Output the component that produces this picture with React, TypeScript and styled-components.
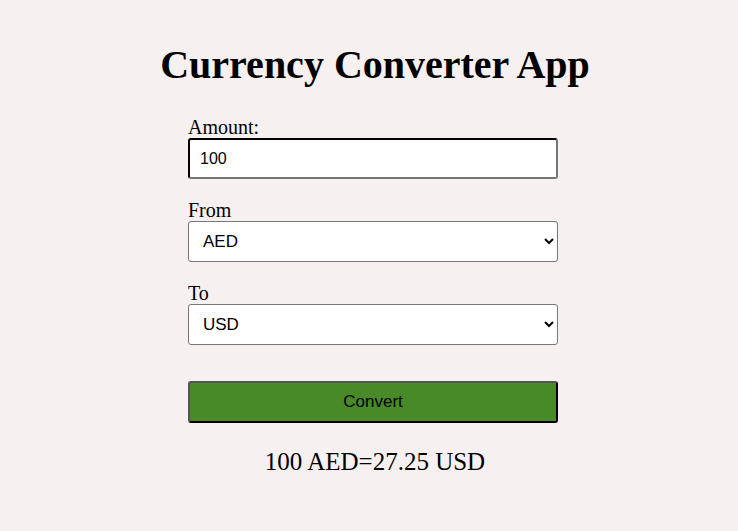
import React, { useState } from "react";
import styled, { createGlobalStyle } from "styled-components";

const Global = createGlobalStyle`
  html, body { margin: 0; padding: 0; background: #f6f0f0; }
  body { font-family: "Liberation Serif", "Times New Roman", serif; color: #000; }
`;

const Page = styled.div`
  display: flex;
  flex-direction: column;
  align-items: center;
  padding-top: 38px;
  padding-left: 8px;
`;

const Title = styled.h1`
  margin: 0 0 24px 4px;
  font-size: 40px;
  font-weight: bold;
  line-height: 54px;
`;

const Form = styled.div`
  width: 370px;
  display: flex;
  flex-direction: column;
`;

const Field = styled.div`
  display: flex;
  flex-direction: column;
  margin-bottom: 20px;
`;

const Label = styled.label`
  font-size: 20px;
  line-height: 22px;
`;

const Input = styled.input`
  box-sizing: border-box;
  height: 41px;
  width: 100%;
  border: 2px inset #767676;
  border-top-color: #202020;
  border-left-color: #202020;
  border-radius: 3px;
  padding: 0 10px;
  font-family: "Liberation Sans", Arial, sans-serif;
  font-size: 16px;
  background: #fff;
  outline: none;
`;

const Select = styled.select`
  box-sizing: border-box;
  height: 41px;
  width: 100%;
  border: 1px solid #767676;
  border-radius: 3px;
  padding: 0 10px;
  font-family: "Liberation Sans", Arial, sans-serif;
  font-size: 17px;
  background: #fff;
  color: #000;
`;

const Button = styled.button`
  box-sizing: border-box;
  margin-top: 16px;
  height: 42px;
  width: 100%;
  background: #488a28;
  border: 2px outset #4a4a4a;
  border-top-color: #555;
  border-left-color: #555;
  border-right-color: #1a1a1a;
  border-bottom-color: #1a1a1a;
  border-radius: 3px;
  font-family: "Liberation Sans", Arial, sans-serif;
  font-size: 17px;
  color: #000;
`;

const Result = styled.p`
  margin: 25px 0 0 4px;
  text-align: center;
  font-size: 25px;
`;

export default function App() {
  const [amount, setAmount] = useState("100");
  return (
    <>
      <Global />
      <Page>
        <Title>Currency Converter App</Title>
        <Form>
          <Field>
            <Label>Amount:</Label>
            <Input value={amount} onChange={(e) => setAmount(e.target.value)} />
          </Field>
          <Field>
            <Label>From</Label>
            <Select defaultValue="AED">
              <option>AED</option>
              <option>USD</option>
            </Select>
          </Field>
          <Field>
            <Label>To</Label>
            <Select defaultValue="USD">
              <option>AED</option>
              <option>USD</option>
            </Select>
          </Field>
          <Button>Convert</Button>
          <Result>100 AED=27.25 USD</Result>
        </Form>
      </Page>
    </>
  );
}
